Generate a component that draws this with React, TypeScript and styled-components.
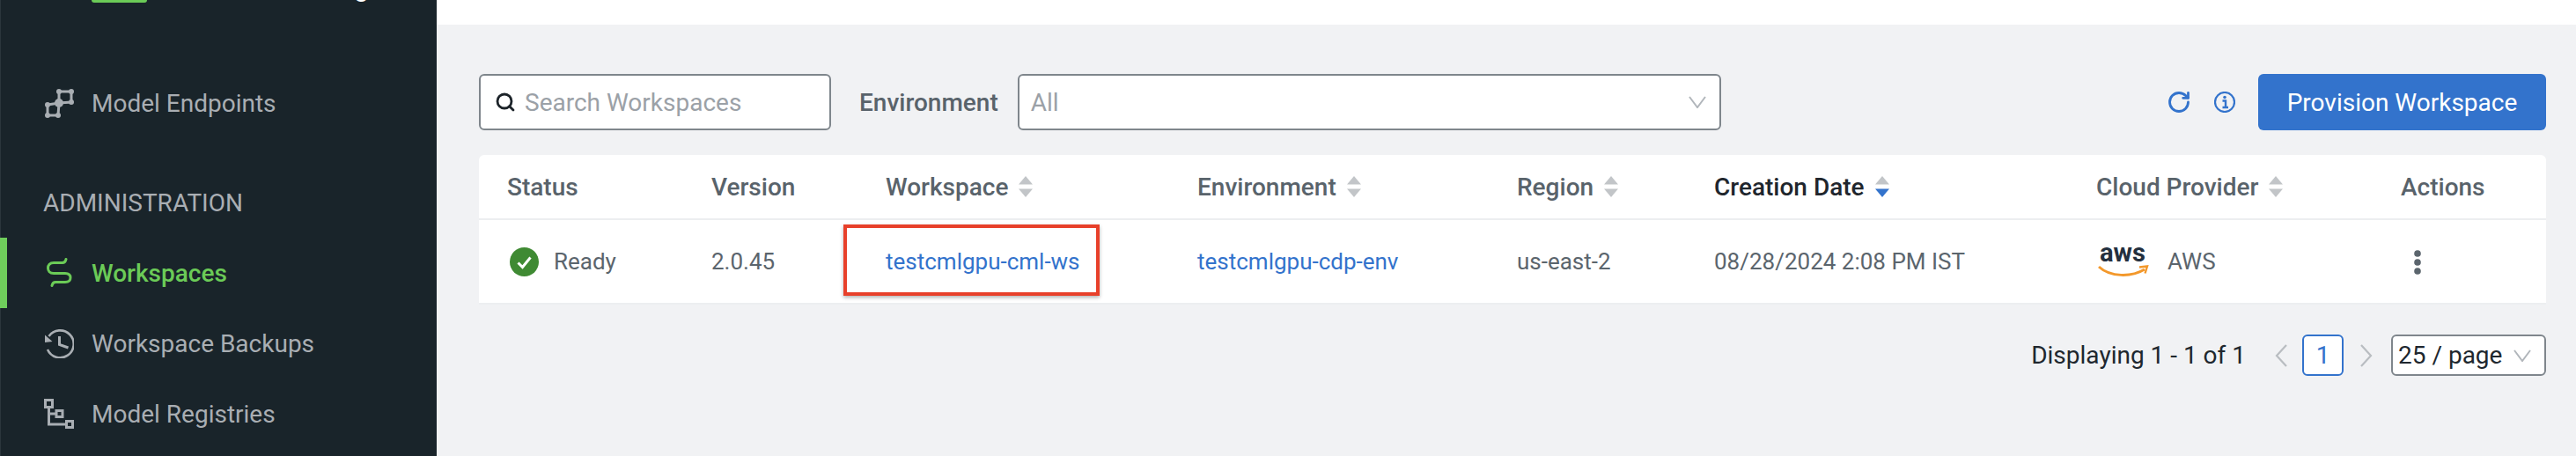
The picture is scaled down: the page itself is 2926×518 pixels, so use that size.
import React from 'react'
import styled, { createGlobalStyle } from 'styled-components'
import { Search, RotateCw } from 'lucide-react'

const GlobalStyle = createGlobalStyle`
  html, body {
    margin: 0;
    padding: 0;
    width: 2926px;
    height: 518px;
    overflow: hidden;
    background: #f1f2f4;
    font-family: Roboto, "Liberation Sans", sans-serif;
  }
  * { box-sizing: border-box; }
`

const Page = styled.div`
  display: flex;
  width: 2926px;
  height: 518px;
  overflow: hidden;
`

const Sidebar = styled.nav`
  width: 496px;
  flex: none;
  background: #19242a;
  border-left: 1px solid #2b363c;
  color: #a9aeb3;
  font-size: 28px;
`

const BrandStrip = styled.div`
  height: 3px;
  overflow: hidden;
  display: flex;
  padding-left: 103px;
  margin-bottom: 74px;
`

const BrandTag = styled.div`
  width: 63px;
  height: 3px;
  flex: none;
  background: #6bcb57;
  border-radius: 0 0 5px 5px;
`

const BrandName = styled.div`
  width: 252px;
  flex: none;
  height: 34px;
  margin-top: -31px;
  line-height: 34px;
  font-size: 30px;
  color: #fff;
  text-align: right;
  white-space: nowrap;
`

const NavItem = styled.div<{ $active?: boolean }>`
  display: flex;
  align-items: center;
  gap: 20px;
  height: 80px;
  padding-left: 50px;
  margin-left: -1px;
  color: ${(p) => (p.$active ? '#6bcb57' : '#a9aeb3')};
  font-weight: ${(p) => (p.$active ? 500 : 400)};
  box-shadow: ${(p) => (p.$active ? 'inset 8px 0 0 #6fce5c' : 'none')};
`

const NavIcon = styled.svg`
  width: 34px;
  height: 34px;
  flex: none;
  display: block;
`

const SectionLabel = styled.div`
  margin-top: 54px;
  padding-left: 48px;
  height: 59px;
  line-height: 40px;
`

const Main = styled.main`
  flex: 1;
  min-width: 0;
  display: flex;
  flex-direction: column;
`

const TopBar = styled.div`
  height: 28px;
  flex: none;
  background: #fff;
`

const Content = styled.div`
  padding: 56px 34px 0 48px;
`

const Toolbar = styled.div`
  display: flex;
  align-items: center;
  height: 64px;
  margin-bottom: 28px;
`

const Field = styled.div<{ $width: number }>`
  display: flex;
  align-items: center;
  width: ${(p) => p.$width}px;
  height: 64px;
  flex: none;
  background: #fff;
  border: 2px solid #7f868c;
  border-radius: 6px;
  font-size: 28px;
  color: #9ba1a7;
`

const SearchGlyph = styled(Search)`
  flex: none;
  margin: 0 10px 0 16px;
  color: #1c2329;
`

const FieldText = styled.span`
  flex: 1;
  padding-left: 13px;
`

const PlaceholderText = styled.span`
  flex: 1;
`

const FilterLabel = styled.label`
  margin: 0 22px 0 32px;
  font-size: 28px;
  font-weight: 500;
  color: #59636b;
`

const Chevron = styled.svg`
  display: block;
  flex: none;
  width: 20px;
  height: 14px;
  margin-right: 15px;
`

const ToolActions = styled.div`
  margin-left: auto;
  display: flex;
  align-items: center;
`

const RefreshGlyph = styled(RotateCw)`
  color: #3373cc;
  margin-right: 26px;
`

const InfoGlyph = styled.svg`
  width: 24px;
  height: 24px;
  display: block;
  margin-right: 26px;
`

const PrimaryButton = styled.button`
  width: 327px;
  height: 64px;
  border: 0;
  border-radius: 6px;
  background: #3373cc;
  color: #fff;
  font: 400 28px Roboto, sans-serif;
  padding: 0;
`

const Table = styled.div`
  background: #fff;
  border-radius: 6px 6px 0 0;
  border-bottom: 2px solid #eceef0;
`

const columns = '232px 198px 354px 363px 224px 434px 346px 1fr'

const HeadRow = styled.div`
  display: grid;
  grid-template-columns: ${columns};
  align-items: center;
  height: 74px;
  padding: 1px 0 1px 32px;
  border-bottom: 2px solid #eceef0;
  font-size: 28px;
  font-weight: 500;
  color: #59636b;
`

const HeadCell = styled.div<{ $sorted?: boolean }>`
  display: flex;
  align-items: center;
  gap: 12px;
  color: ${(p) => (p.$sorted ? '#1f262d' : '#59636b')};
`

const SortIcon = styled.svg`
  width: 16px;
  height: 24px;
  display: block;
  flex: none;
`

const BodyRow = styled.div`
  display: grid;
  grid-template-columns: ${columns};
  align-items: stretch;
  height: 94px;
  padding-left: 32px;
  font-size: 26px;
  color: #5b656d;
`

const Cell = styled.div`
  position: relative;
  display: flex;
  align-items: center;
`

const StatusIcon = styled.svg`
  width: 33px;
  height: 33px;
  display: block;
  margin: 0 17px 0 3px;
`

const TableLink = styled.a`
  color: #3373cc;
  text-decoration: none;
`

// the red box drawn on the screenshot around the workspace name
const Callout = styled.div`
  position: absolute;
  left: -48px;
  top: 5px;
  width: 291px;
  height: 81px;
  border: 4px solid #e8402a;
  box-shadow: 0 2px 4px rgba(0, 0, 0, 0.3);
  pointer-events: none;
`

const AwsLogo = styled.svg`
  width: 58px;
  height: 36px;
  display: block;
  margin: 0 21px 0 2px;
`

const KebabIcon = styled.svg`
  width: 10px;
  height: 30px;
  display: block;
  margin-left: 14px;
`

const Pagination = styled.div`
  display: flex;
  align-items: center;
  justify-content: flex-end;
  height: 47px;
  margin-top: 34px;
  font-size: 28px;
  color: #20272e;
`

const PageArrow = styled.svg`
  width: 14px;
  height: 26px;
  display: block;
  flex: none;
`

const PageNumber = styled.div`
  width: 47px;
  height: 47px;
  margin: 0 19px 0 17px;
  display: flex;
  align-items: center;
  justify-content: center;
  background: #fff;
  border: 2px solid #3373cc;
  border-radius: 6px;
  color: #3373cc;
`

const PageSize = styled.div`
  width: 176px;
  height: 47px;
  margin-left: 21px;
  display: flex;
  align-items: center;
  padding-left: 6px;
  background: #fff;
  border: 2px solid #7f868c;
  border-radius: 6px;
`

const PageSizeText = styled.span`
  flex: 1;
  white-space: nowrap;
`

const DisplayText = styled.span`
  margin-right: 33px;
`

const ChevronDown = () => (
  <Chevron viewBox="0 0 20 14" fill="none" stroke="#b1b6bb" strokeWidth="2">
    <path d="M1 1l9 12 9-12" />
  </Chevron>
)

const SortArrows = ({ active }: { active?: boolean }) => (
  <SortIcon viewBox="0 0 16 24">
    <path d="M8 0l8 9.5H0z" fill="#c2c5c8" />
    <path d="M8 24L0 14.5h16z" fill={active ? '#3373cc' : '#c2c5c8'} />
  </SortIcon>
)

const EndpointsIcon = () => (
  <NavIcon viewBox="0 0 34 34" fill="none" stroke="#a9aeb3" strokeWidth="3">
    <path d="M17 4h14v12L17 17zM4 19l13-2-1 14H4z" />
    <g fill="#a9aeb3" stroke="none">
      <circle cx="17" cy="4" r="3" />
      <circle cx="31" cy="4" r="3" />
      <circle cx="31" cy="16" r="3" />
      <circle cx="17" cy="17" r="5" />
      <circle cx="4" cy="19" r="3" />
      <circle cx="4" cy="31" r="3" />
      <circle cx="16" cy="31" r="3" />
    </g>
  </NavIcon>
)

const WorkspacesIcon = () => (
  <NavIcon viewBox="0 0 34 34" fill="none" stroke="#6bcb57" strokeWidth="3" strokeLinecap="round">
    <path d="M25 1.500c-.5 2.500-1.500 4-4 4H11c-4.500 0-6.500 3-6.500 6s2 6 6.500 6h13c4 0 6 2 6 5s-2 5-6 5H13c-2.500 0-3.500 1.500-4 4" />
  </NavIcon>
)

const BackupsIcon = () => (
  <NavIcon viewBox="0 0 34 34" fill="none" stroke="#a9aeb3" strokeWidth="2.6">
    <path d="M5.500 9A15.500 15.500 0 1 1 4 24" />
    <path d="M1 7.500l8.500 7.500L1 16z" fill="#a9aeb3" stroke="none" />
    <path d="M17.500 9v9.500l10 3.500" strokeWidth="3" />
  </NavIcon>
)

const RegistriesIcon = () => (
  <NavIcon viewBox="0 0 34 34" fill="none" stroke="#a9aeb3" strokeWidth="3">
    <path d="M1.500 1.500h8v8h-8zM14 13.500h7v7h-7zM25.500 25.500h7v7h-7z" />
    <path d="M5.500 10v19H25M5.500 17H14" />
  </NavIcon>
)

const App = () => (
  <Page>
    <GlobalStyle />
    <Sidebar>
      <BrandStrip>
        <BrandTag />
        <BrandName>Machine Learning</BrandName>
      </BrandStrip>
      <NavItem>
        <EndpointsIcon />
        Model Endpoints
      </NavItem>
      <SectionLabel>ADMINISTRATION</SectionLabel>
      <NavItem $active>
        <WorkspacesIcon />
        Workspaces
      </NavItem>
      <NavItem>
        <BackupsIcon />
        Workspace Backups
      </NavItem>
      <NavItem>
        <RegistriesIcon />
        Model Registries
      </NavItem>
    </Sidebar>
    <Main>
      <TopBar />
      <Content>
        <Toolbar>
          <Field $width={400}>
            <SearchGlyph size={24} strokeWidth={2.8} />
            <PlaceholderText>Search Workspaces</PlaceholderText>
          </Field>
          <FilterLabel>Environment</FilterLabel>
          <Field $width={799}>
            <FieldText>All</FieldText>
            <ChevronDown />
          </Field>
          <ToolActions>
            <RefreshGlyph size={28} strokeWidth={2.4} />
            <InfoGlyph viewBox="0 0 24 24" fill="none" stroke="#3373cc">
              <circle cx="12" cy="12" r="11" strokeWidth="2.2" />
              <path d="M9.500 10.500H13V18M9.500 18h6.500" strokeWidth="2.4" />
              <circle cx="12" cy="6.500" r="1.800" fill="#3373cc" stroke="none" />
            </InfoGlyph>
            <PrimaryButton>Provision Workspace</PrimaryButton>
          </ToolActions>
        </Toolbar>
        <Table>
          <HeadRow>
            <HeadCell>Status</HeadCell>
            <HeadCell>Version</HeadCell>
            <HeadCell>Workspace <SortArrows /></HeadCell>
            <HeadCell>Environment <SortArrows /></HeadCell>
            <HeadCell>Region <SortArrows /></HeadCell>
            <HeadCell $sorted>Creation Date <SortArrows active /></HeadCell>
            <HeadCell>Cloud Provider <SortArrows /></HeadCell>
            <HeadCell>Actions</HeadCell>
          </HeadRow>
          <BodyRow>
            <Cell>
              <StatusIcon viewBox="0 0 33 33">
                <circle cx="16.500" cy="16.500" r="16.500" fill="#3f8a33" />
                <path d="M9.500 17.500l5 5 9-11" fill="none" stroke="#fff" strokeWidth="3" />
              </StatusIcon>
              Ready
            </Cell>
            <Cell>2.0.45</Cell>
            <Cell>
              <TableLink>testcmlgpu-cml-ws</TableLink>
              <Callout />
            </Cell>
            <Cell>
              <TableLink>testcmlgpu-cdp-env</TableLink>
            </Cell>
            <Cell>us-east-2</Cell>
            <Cell>08/28/2024 2:08 PM IST</Cell>
            <Cell>
              <AwsLogo viewBox="0 0 58 36">
                <text x="2" y="18" fontFamily="Roboto, sans-serif" fontSize="29" fontWeight="700" fill="#232f3e" textLength="52" lengthAdjust="spacingAndGlyphs">aws</text>
                <path d="M1 24C14 36 38 36 53 27" fill="none" stroke="#f3982b" strokeWidth="3" />
                <path d="M47 24.500l9-1-2.500 8" fill="none" stroke="#f3982b" strokeWidth="2.400" />
              </AwsLogo>
              AWS
            </Cell>
            <Cell>
              <KebabIcon viewBox="0 0 10 30" fill="#5b656d">
                <circle cx="5" cy="6" r="3.800" />
                <circle cx="5" cy="16" r="3.800" />
                <circle cx="5" cy="26" r="3.800" />
              </KebabIcon>
            </Cell>
          </BodyRow>
        </Table>
        <Pagination>
          <DisplayText>Displaying 1 - 1 of 1</DisplayText>
          <PageArrow viewBox="0 0 14 26" fill="none" stroke="#b9bdc1" strokeWidth="2.200">
            <path d="M13 1L2 13l11 12" />
          </PageArrow>
          <PageNumber>1</PageNumber>
          <PageArrow viewBox="0 0 14 26" fill="none" stroke="#b9bdc1" strokeWidth="2.200">
            <path d="M1 1l11 12L1 25" />
          </PageArrow>
          <PageSize>
            <PageSizeText>25 / page</PageSizeText>
            <ChevronDown />
          </PageSize>
        </Pagination>
      </Content>
    </Main>
  </Page>
)

export default App
